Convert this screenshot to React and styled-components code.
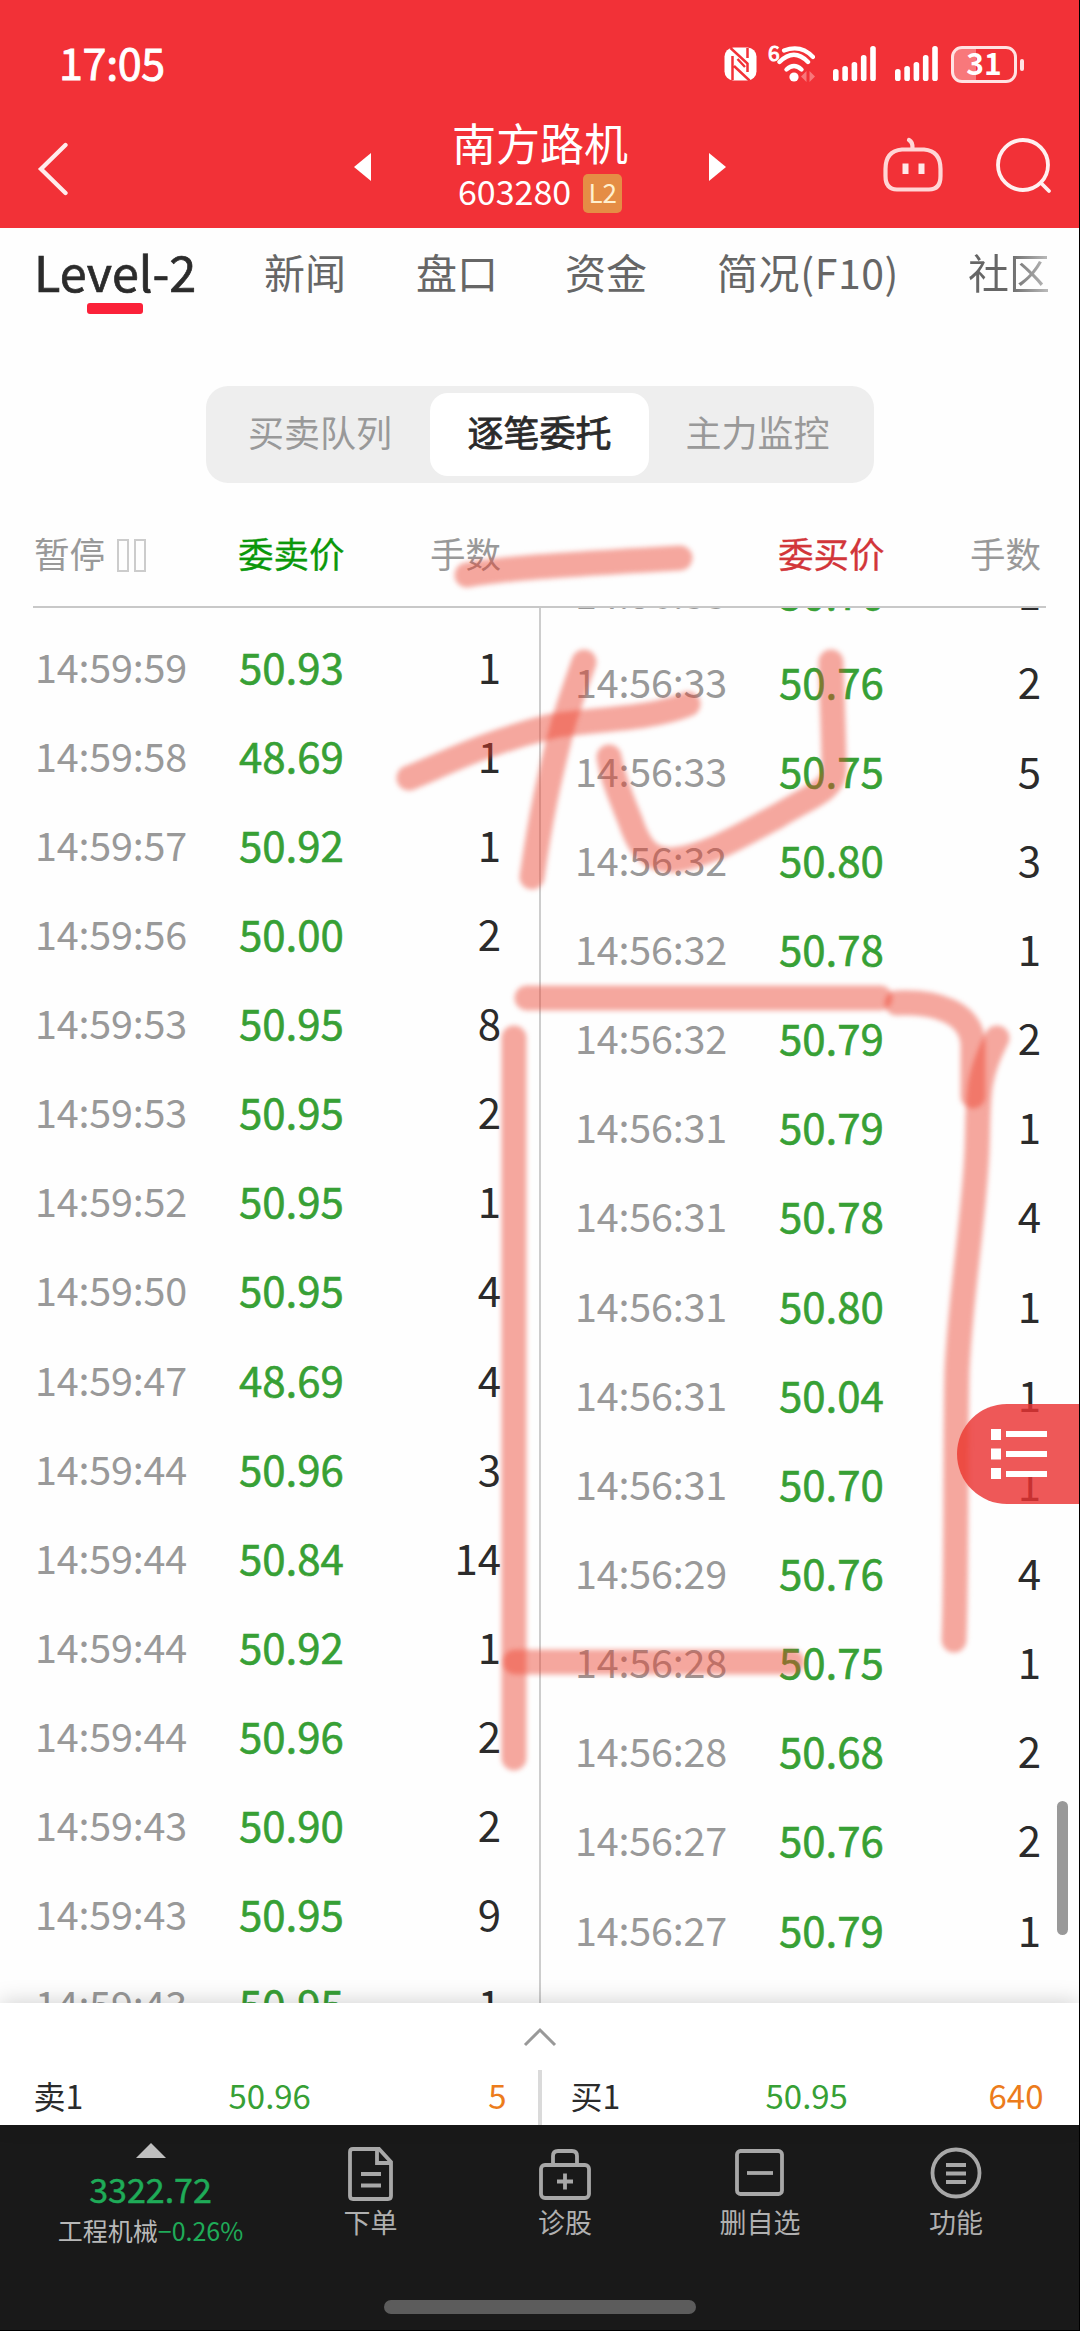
import React, { useState } from "react";
import styled, { createGlobalStyle } from "styled-components";

const sells = [
  ["14:59:59", "50.93", 1],
  ["14:59:58", "48.69", 1],
  ["14:59:57", "50.92", 1],
  ["14:59:56", "50.00", 2],
  ["14:59:53", "50.95", 8],
  ["14:59:53", "50.95", 2],
  ["14:59:52", "50.95", 1],
  ["14:59:50", "50.95", 4],
  ["14:59:47", "48.69", 4],
  ["14:59:44", "50.96", 3],
  ["14:59:44", "50.84", 14],
  ["14:59:44", "50.92", 1],
  ["14:59:44", "50.96", 2],
  ["14:59:43", "50.90", 2],
  ["14:59:43", "50.95", 9],
  ["14:59:43", "50.95", 1],
];

const buys = [
  ["14:56:33", "50.76", 1],
  ["14:56:33", "50.76", 2],
  ["14:56:33", "50.75", 5],
  ["14:56:32", "50.80", 3],
  ["14:56:32", "50.78", 1],
  ["14:56:32", "50.79", 2],
  ["14:56:31", "50.79", 1],
  ["14:56:31", "50.78", 4],
  ["14:56:31", "50.80", 1],
  ["14:56:31", "50.04", 1],
  ["14:56:31", "50.70", 1],
  ["14:56:29", "50.76", 4],
  ["14:56:28", "50.75", 1],
  ["14:56:28", "50.68", 2],
  ["14:56:27", "50.76", 2],
  ["14:56:27", "50.79", 1],
];

const tabs = ["Level-2", "新闻", "盘口", "资金", "简况(F10)", "社区"];
const modes = ["买卖队列", "逐笔委托", "主力监控"];

// highlighter strokes, in page pixels
const strokes = [
  "M467 575C500 569 540 566 680 558",
  "M584 662C574 690 566 712 561 732C553 765 543 800 532 877",
  "M409 778C440 766 480 744 552 726C590 719 650 720 688 704",
  "M609 757C613 780 622 800 630 820C640 850 650 860 673 860C710 856 750 830 776 817C810 796 834 790 834 770C834 740 832 700 831 662",
  "M527 998H880",
  "M897 1003C935 1001 972 1012 973 1045V1096",
  "M997 1038C975 1080 979 1100 977 1150C974 1220 961 1290 957 1370C955 1450 957 1560 954 1640",
  "M514 1038V1758",
  "M515 1662H792",
];

function Signal() {
  return (
    <svg width="43" height="36" viewBox="0 0 43 36" fill="#fff">
      <rect x="0" y="23" width="5.6" height="12" rx="2.6" />
      <rect x="9.3" y="20" width="5.6" height="15" rx="2.6" />
      <rect x="18.6" y="16" width="5.6" height="19" rx="2.6" />
      <rect x="27.9" y="9" width="5.6" height="26" rx="2.6" />
      <rect x="37.2" y="0" width="5.6" height="35" rx="2.6" />
    </svg>
  );
}

function StatusIcons() {
  return (
    <Icons>
      <svg width="33" height="34" viewBox="0 0 33 34">
        <rect x="0.5" y="0.5" width="32" height="33" rx="9" fill="#fff" />
        <path
          d="M8.5 33V9M6.500 1L23.500 16.500V25M23.500 1V11M10 19L25.500 33.500M13.500 12L21 20"
          fill="none"
          stroke="#f23137"
          strokeWidth="2.5"
        />
      </svg>
      <Wifi>
        <sup>6</sup>
        <svg width="38" height="37" viewBox="0 0 38 37" fill="none" stroke="#fff" strokeLinecap="round">
          <path d="M7 4.5Q24 -2 36 11" strokeWidth="4.2" />
          <path d="M2.5 16Q17 1.5 31 16" strokeWidth="4.4" />
          <path d="M9.5 23.5Q17 16.5 24.5 23.5" strokeWidth="4.4" />
          <circle cx="17" cy="31" r="4.6" fill="#fff" stroke="none" />
          <path d="M29.5 25V36L24 30.5ZM32.5 25V36L38 30.5Z" fill="#f8777a" stroke="none" />
        </svg>
      </Wifi>
      <Signal />
      <Signal />
      <Battery>
        <span>31</span>
      </Battery>
    </Icons>
  );
}

function OrderList({ rows, shift }) {
  return (
    <List $shift={shift}>
      {rows.map(([time, price, lots], i) => (
        <Row key={i}>
          <Time>{time}</Time>
          <Price>{price}</Price>
          <Lots>{lots}</Lots>
        </Row>
      ))}
    </List>
  );
}

function App() {
  const [tab, setTab] = useState("Level-2");
  const [mode, setMode] = useState("逐笔委托");

  return (
    <Page>
      <GlobalStyle />
      <Header>
        <StatusBar>
          <Clock>17:05</Clock>
          <StatusIcons />
        </StatusBar>
        <TitleBar>
          <BackIcon width="34" height="54" viewBox="0 0 34 54">
            <path d="M28.5 3L4 27L28.5 51" strokeWidth="4.3" />
          </BackIcon>
          <Stock>
            <svg width="17" height="28" viewBox="0 0 17 28">
              <path d="M0 14L17 0V28Z" fill="#fff" />
            </svg>
            <StockName>
              <h1>南方路机</h1>
              <p>
                603280 <Badge>L2</Badge>
              </p>
            </StockName>
            <svg width="17" height="28" viewBox="0 0 17 28">
              <path d="M17 14L0 0V28Z" fill="#fff" />
            </svg>
          </Stock>
          <HeaderActions>
            <svg width="60" height="56" viewBox="0 0 60 56" fill="none" stroke="#ffd6d6" strokeWidth="4.2" strokeLinecap="round">
              <path d="M26 3Q30 5 29.500 12" />
              <path d="M19 12.500H41Q57.500 14 57.500 32V39Q57.500 52.500 46 52.500H14Q2.500 52.500 2.500 39V32Q2.500 14 19 12.500Z" />
              <path d="M22.500 26.500V37M38.500 26.500V37" strokeWidth="6" strokeLinecap="butt" stroke="#ffe8e8" />
            </svg>
            <svg width="58" height="58" viewBox="0 0 58 58" fill="none" stroke="#fff0f0" strokeWidth="3.8" strokeLinecap="round">
              <circle cx="28" cy="28" r="25" />
              <path d="M46 46L54 54" />
            </svg>
          </HeaderActions>
        </TitleBar>
      </Header>

      <Tabs>
        {tabs.map((name) => (
          <Tab key={name} $active={name === tab} onClick={() => setTab(name)}>
            {name}
          </Tab>
        ))}
      </Tabs>

      <Segment>
        {modes.map((name) => (
          <SegmentItem key={name} $active={name === mode} onClick={() => setMode(name)}>
            {name}
          </SegmentItem>
        ))}
      </Segment>

      <TableHead>
        <HeadHalf>
          <Pause>
            暂停
            <i />
            <i />
          </Pause>
          <HeadPrice $color="#0b980b">委卖价</HeadPrice>
          <span>手数</span>
        </HeadHalf>
        <HeadHalf>
          <span />
          <HeadPrice $color="#d2363a">委买价</HeadPrice>
          <span>手数</span>
        </HeadHalf>
      </TableHead>

      <Orders>
        <OrderList rows={sells} shift={14.5} />
        <Divider />
        <OrderList rows={buys} shift={-59.5} />
      </Orders>

      <Sheet>
        <Handle width="34" height="20" viewBox="0 0 34 20">
          <path d="M2 18L17 3L32 18" fill="none" stroke="#999" strokeWidth="3" />
        </Handle>
        <Quotes>
          <Quote>
            <b>卖1</b>
            <em>50.96</em>
            <strong>5</strong>
          </Quote>
          <QuoteLine />
          <Quote>
            <b>买1</b>
            <em>50.95</em>
            <strong>640</strong>
          </Quote>
        </Quotes>
      </Sheet>

      <BottomNav>
        <NavRow>
          <Index>
            <svg width="30" height="15" viewBox="0 0 30 15">
              <path d="M15 0L30 15H0Z" fill="#bfbfbf" />
            </svg>
            <IndexValue>3322.72</IndexValue>
            <IndexName>
              工程机械<span>−0.26%</span>
            </IndexName>
          </Index>
          <NavItem>
            <NavIcon viewBox="0 0 54 54">
              <path d="M35 2H9Q6 2 6 5V49Q6 52 9 52H44Q47 52 47 49V15Z" />
              <path d="M33 2V16H47M17 27H37M17 38.500H37" />
            </NavIcon>
            下单
          </NavItem>
          <NavItem>
            <NavIcon viewBox="0 0 54 54">
              <rect x="3" y="18" width="48" height="33" rx="4" />
              <path d="M15 18V9Q15 4 20 4H34Q39 4 39 9V18M27 26.500V42.500M19 34.500H35" />
            </NavIcon>
            诊股
          </NavItem>
          <NavItem>
            <NavIcon viewBox="0 0 54 54">
              <rect x="4" y="4" width="45" height="43" rx="3.500" />
              <path d="M14 26H40" />
            </NavIcon>
            删自选
          </NavItem>
          <NavItem>
            <NavIcon viewBox="0 0 54 54">
              <circle cx="27" cy="26" r="23.500" />
              <path d="M17 18H37M17 26.500H37M17 35H37" />
            </NavIcon>
            功能
          </NavItem>
        </NavRow>
        <HomeBar />
      </BottomNav>

      <ScrollThumb />
      <FloatButton>
        <svg width="57" height="50" viewBox="0 0 57 50" fill="#fff">
          <path d="M0 0H10V11H0ZM0 19.500H10V30.500H0ZM0 39H10V50H0Z" />
          <path d="M15 2H56V8H15ZM15 22H56V28H15ZM15 42H56V48H15Z" />
        </svg>
      </FloatButton>
      <Marker viewBox="0 0 1080 2331">
        {strokes.map((d) => (
          <path key={d} d={d} />
        ))}
      </Marker>
    </Page>
  );
}

export default App;

const GlobalStyle = createGlobalStyle`
  * {
    box-sizing: border-box;
    margin: 0;
    padding: 0;
  }
  body {
    background: #000;
    font-family: "Noto Sans CJK SC", "Noto Sans", sans-serif;
  }
`;

const Page = styled.div`
  position: relative;
  display: flex;
  flex-direction: column;
  width: 1080px;
  height: 2331px;
  overflow: hidden;
  background: #fefefe;
  border-right: 1px solid #000;
  border-bottom: 1px solid #000;
`;

const Header = styled.header`
  flex: none;
  height: 228px;
  color: #fff;
  background: #f23137;
`;

const StatusBar = styled.div`
  display: flex;
  justify-content: space-between;
  height: 118px;
  padding: 0 56px 0 59px;
`;

const Clock = styled.div`
  font-size: 43px;
  line-height: 122px;
  letter-spacing: -0.3px;
  -webkit-text-stroke: 0.9px #fff;
`;

const Icons = styled.div`
  display: flex;
  align-items: center;
  height: 128px;
  gap: 19px;
`;

const Wifi = styled.div`
  display: flex;
  width: 47px;
  margin: 0 -1px 0 -8px;

  sup {
    width: 9px;
    font-size: 21px;
    line-height: 12px;
    -webkit-text-stroke: 1px #fff;
  }

  svg {
    flex: none;
  }
`;

const Battery = styled.div`
  position: relative;
  width: 66px;
  height: 37px;
  margin: 0 6px 0 -6px;
  border: 3px solid #ffe3e3;
  border-radius: 11px;
  background: linear-gradient(90deg, #f8787b 36%, transparent 36%);
  text-align: center;

  span {
    display: block;
    font-size: 30px;
    font-weight: 700;
    line-height: 27px;
  }

  &::after {
    content: "";
    position: absolute;
    top: 10px;
    right: -10px;
    width: 4px;
    height: 12px;
    border-radius: 2px;
    background: #ffe3e3;
  }
`;

const TitleBar = styled.div`
  display: flex;
  justify-content: space-between;
  height: 110px;
  padding: 0 26px 0 37px;
`;

const BackIcon = styled.svg`
  margin-top: 24px;
  fill: none;
  stroke: #ffecec;
  stroke-linecap: round;
`;

const Stock = styled.div`
  display: flex;
  justify-content: space-between;
  width: 372px;
  margin-left: 126px;

  > svg {
    margin-top: 35px;
  }
`;

const StockName = styled.div`
  text-align: center;

  h1 {
    font-size: 44px;
    font-weight: 400;
    line-height: 48px;
  }

  p {
    display: flex;
    align-items: center;
    gap: 12px;
    padding-left: 6px;
    font-size: 34px;
    line-height: 48px;
    margin-top: 1px;
  }
`;

const Badge = styled.span`
  width: 39px;
  height: 39px;
  margin-top: 4px;
  border-radius: 5px;
  background: #e58d45;
  color: #fff0cf;
  font-size: 26px;
  line-height: 35px;
  text-align: center;
`;

const HeaderActions = styled.div`
  display: flex;
  gap: 52px;
  margin-top: 19px;
`;

const Tabs = styled.nav`
  display: grid;
  grid-template-columns: 230px 152px 149px 152px 251px 80px;
  flex: none;
  height: 158px;
  padding-left: 34px;
  overflow: hidden;
`;

const Tab = styled.div`
  color: ${(props) => (props.$active ? "#2b2b2b" : "#666")};
  font-size: ${(props) => (props.$active ? "48.5px" : "41px")};
  line-height: 86px;
  white-space: nowrap;
  -webkit-text-stroke: ${(props) => (props.$active ? "0.7px #2b2b2b" : "0")};

  &::after {
    content: "";
    display: ${(props) => (props.$active ? "block" : "none")};
    width: 56px;
    height: 11px;
    margin: -11px 0 0 53px;
    border-radius: 3px;
    background: #fb2139;
  }

  &:nth-child(5) {
    letter-spacing: 0.6px;
  }

  &:last-child {
    color: transparent;
    background: linear-gradient(90deg, #666 50%, #bbb 100%);
    background-clip: text;
  }
`;

const Segment = styled.div`
  display: grid;
  grid-template-columns: 220px 219px 217px;
  flex: none;
  width: 668px;
  height: 97px;
  margin-left: 206px;
  padding: 7px 4px;
  border-radius: 22px;
  background: #eee;
`;

const SegmentItem = styled.div`
  border-radius: 18px;
  background: ${(props) => (props.$active ? "#fff" : "none")};
  color: ${(props) => (props.$active ? "#2b2b2b" : "#999")};
  font-size: 36px;
  line-height: 77px;
  text-align: center;
  -webkit-text-stroke: ${(props) => (props.$active ? "0.8px #2b2b2b" : "0")};
`;

const TableHead = styled.div`
  display: flex;
  flex: none;
  height: 123px;
  width: 1080px;
`;

const HeadHalf = styled.div`
  display: grid;
  grid-template-columns: 204px 1fr auto;
  width: 540px;
  padding: 0 39px 0 34px;
  color: #999;
  font-size: 35.5px;
  line-height: 140px;
`;

const Pause = styled.div`
  display: flex;
  align-items: center;

  i {
    width: 12px;
    height: 33px;
    margin: 4px 0 0 5px;
    border: 2px solid #ccc;
  }

  i:first-of-type {
    margin-left: 12px;
  }
`;

const HeadPrice = styled.span`
  color: ${(props) => props.$color};
  -webkit-text-stroke: 0.3px ${(props) => props.$color};
`;

const Orders = styled.div`
  display: flex;
  flex: none;
  height: 1397px;
  overflow: hidden;

  &::before {
    content: "";
    width: 1014px;
    height: 2px;
    margin: 0 -1047px 0 33px;
    background: #c8c8c8;
    z-index: 1;
  }
`;

const Divider = styled.div`
  flex: none;
  width: 2px;
  margin: 2px -2px 0 0;
  background: #cdcdcd;
`;

const List = styled.div`
  flex: none;
  width: 540px;
  margin-top: ${(props) => props.$shift}px;
`;

const Row = styled.div`
  display: grid;
  grid-template-columns: 204px 1fr auto;
  height: 89.15px;
  padding: 0 38px 0 36px;
  line-height: 90px;
`;

const Time = styled.span`
  color: #999;
  font-size: 39.5px;
  letter-spacing: -0.2px;
`;

const Price = styled.span`
  color: #37a035;
  font-size: 42px;
  -webkit-text-stroke: 0.6px #37a035;
`;

const Lots = styled.span`
  color: #2b2b2b;
  font-size: 42px;
`;

const Sheet = styled.div`
  position: relative;
  display: flex;
  flex-direction: column;
  align-items: center;
  flex: none;
  height: 122px;
  background: #fff;
  box-shadow: 0 -2px 20px rgba(0, 0, 0, 0.17);
`;

const Handle = styled.svg`
  flex: none;
  margin: 24px 0 23px;
`;

const Quotes = styled.div`
  display: flex;
  flex: none;
  width: 1080px;
  height: 55px;
`;

const Quote = styled.div`
  display: grid;
  grid-template-columns: 195px 1fr auto;
  width: 538px;
  padding: 0 31px 0 34px;
  font-size: 33px;
  line-height: 50px;

  & + div + & {
    padding: 0 36px 0 29px;
  }

  b {
    color: #2b2b2b;
    font-size: 32px;
    font-weight: 400;
  }

  em {
    color: #37a035;
    font-style: normal;
  }

  strong {
    color: #ec7c1c;
    font-weight: 400;
  }
`;

const QuoteLine = styled.div`
  width: 4px;
  background: #dadada;
`;

const BottomNav = styled.footer`
  flex: none;
  height: 205px;
  background: #191919;
`;

const NavRow = styled.div`
  display: grid;
  grid-template-columns: 273px 195px 194px 196px 196px;
  height: 175px;
`;

const Index = styled.div`
  display: flex;
  flex-direction: column;
  align-items: center;
  padding: 18px 0 0 28px;
`;

const IndexValue = styled.div`
  margin-top: 9px;
  color: #1fab58;
  font-size: 34px;
  line-height: 44px;
  -webkit-text-stroke: 0.5px #1fab58;
`;

const IndexName = styled.div`
  color: #b8b8b8;
  font-size: 25px;
  line-height: 39px;
  white-space: nowrap;

  span {
    color: #1fab58;
  }
`;

const NavItem = styled.div`
  display: flex;
  flex-direction: column;
  align-items: center;
  padding-top: 22px;
  color: #b0b0b0;
  font-size: 27px;
  line-height: 41px;
`;

const NavIcon = styled.svg`
  width: 54px;
  height: 54px;
  fill: none;
  stroke: #a8a8a8;
  stroke-width: 3.8;
`;

const HomeBar = styled.div`
  width: 312px;
  height: 14px;
  margin: 0 auto;
  border-radius: 7px;
  background: #5c5c5c;
`;

const ScrollThumb = styled.div`
  position: absolute;
  top: 1801px;
  right: 11px;
  width: 11px;
  height: 134px;
  border-radius: 6px;
  background: #999;
`;

const FloatButton = styled.div`
  position: absolute;
  top: 1404px;
  right: 0;
  width: 122px;
  height: 100px;
  padding: 25px 0 0 34px;
  border-radius: 50px 0 0 50px;
  background: rgba(234, 51, 51, 0.82);
`;

const Marker = styled.svg`
  position: absolute;
  top: 0;
  left: 0;
  width: 1080px;
  height: 2331px;
  fill: none;
  stroke: rgba(235, 62, 42, 0.45);
  stroke-width: 25;
  stroke-linecap: round;
  filter: blur(2.6px);
  pointer-events: none;
`;
